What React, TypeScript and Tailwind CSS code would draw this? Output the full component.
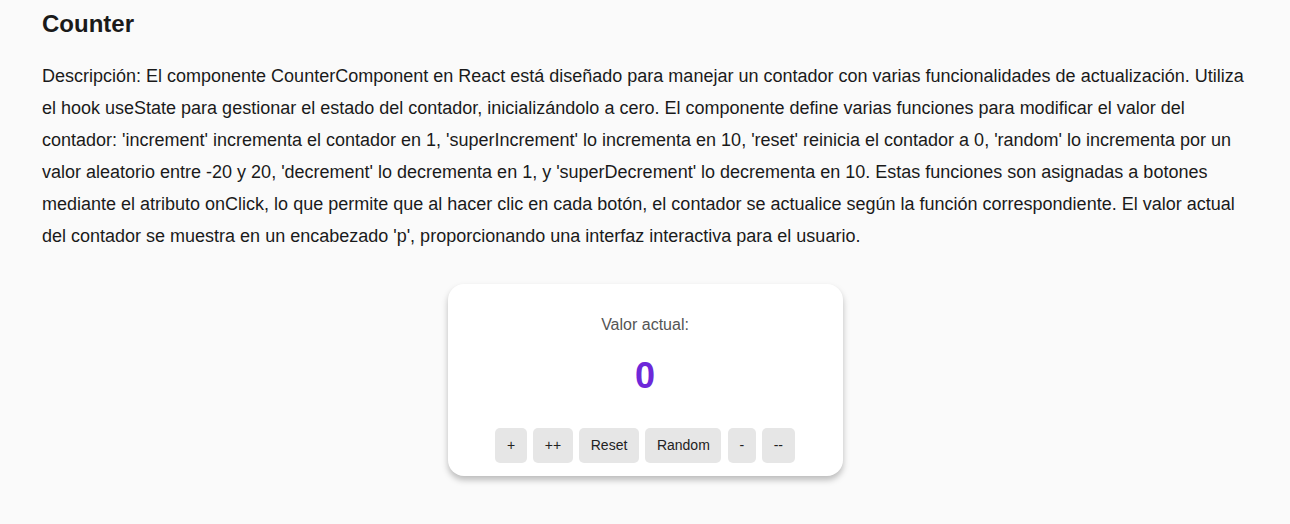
const description =
  "Descripción: El componente CounterComponent en React está diseñado para manejar un contador con varias funcionalidades de actualización. Utiliza el hook useState para gestionar el estado del contador, inicializándolo a cero. El componente define varias funciones para modificar el valor del contador: 'increment' incrementa el contador en 1, 'superIncrement' lo incrementa en 10, 'reset' reinicia el contador a 0, 'random' lo incrementa por un valor aleatorio entre -20 y 20, 'decrement' lo decrementa en 1, y 'superDecrement' lo decrementa en 10. Estas funciones son asignadas a botones mediante el atributo onClick, lo que permite que al hacer clic en cada botón, el contador se actualice según la función correspondiente. El valor actual del contador se muestra en un encabezado 'p', proporcionando una interfaz interactiva para el usuario."

import { useState } from 'react'

export default function App() {
  const [count, setCount] = useState(0)

  const buttons: { label: string; onClick: () => void }[] = [
    { label: '+', onClick: () => setCount((c) => c + 1) },
    { label: '++', onClick: () => setCount((c) => c + 10) },
    { label: 'Reset', onClick: () => setCount(0) },
    {
      label: 'Random',
      onClick: () => setCount((c) => c + Math.floor(Math.random() * 41) - 20),
    },
    { label: '-', onClick: () => setCount((c) => c - 1) },
    { label: '--', onClick: () => setCount((c) => c - 10) },
  ]

  return (
    <div className="min-h-[524px] bg-[#fafafa] px-[42px] pt-2 font-['Liberation_Sans',Arial,sans-serif] text-[#1a1a1a]">
      <h2 className="text-[24px] font-bold leading-[32px]">Counter</h2>
      <p className="mt-[20px] text-[18px] leading-[32px]">{description}</p>

      <div className="mx-auto mt-[32px] flex w-[395px] flex-col items-center rounded-2xl bg-white pb-[13px] pt-[31px] shadow-[0_4px_6px_rgba(0,0,0,0.25)]">
        <p className="text-[16px] leading-[20px] text-[#555]">Valor actual:</p>
        <p className="mt-[19px] text-[36px] font-bold leading-[44px] text-[#6d28d9]">
          {count}
        </p>
        <div className="mt-[30px] flex gap-[6.4px]">
          {buttons.map((b) => (
            <button
              key={b.label}
              onClick={b.onClick}
              className="h-[35px] rounded-[5px] bg-[#e6e6e6] px-[11.6px] text-[14px] text-[#222]"
            >
              {b.label}
            </button>
          ))}
        </div>
      </div>
    </div>
  )
}
